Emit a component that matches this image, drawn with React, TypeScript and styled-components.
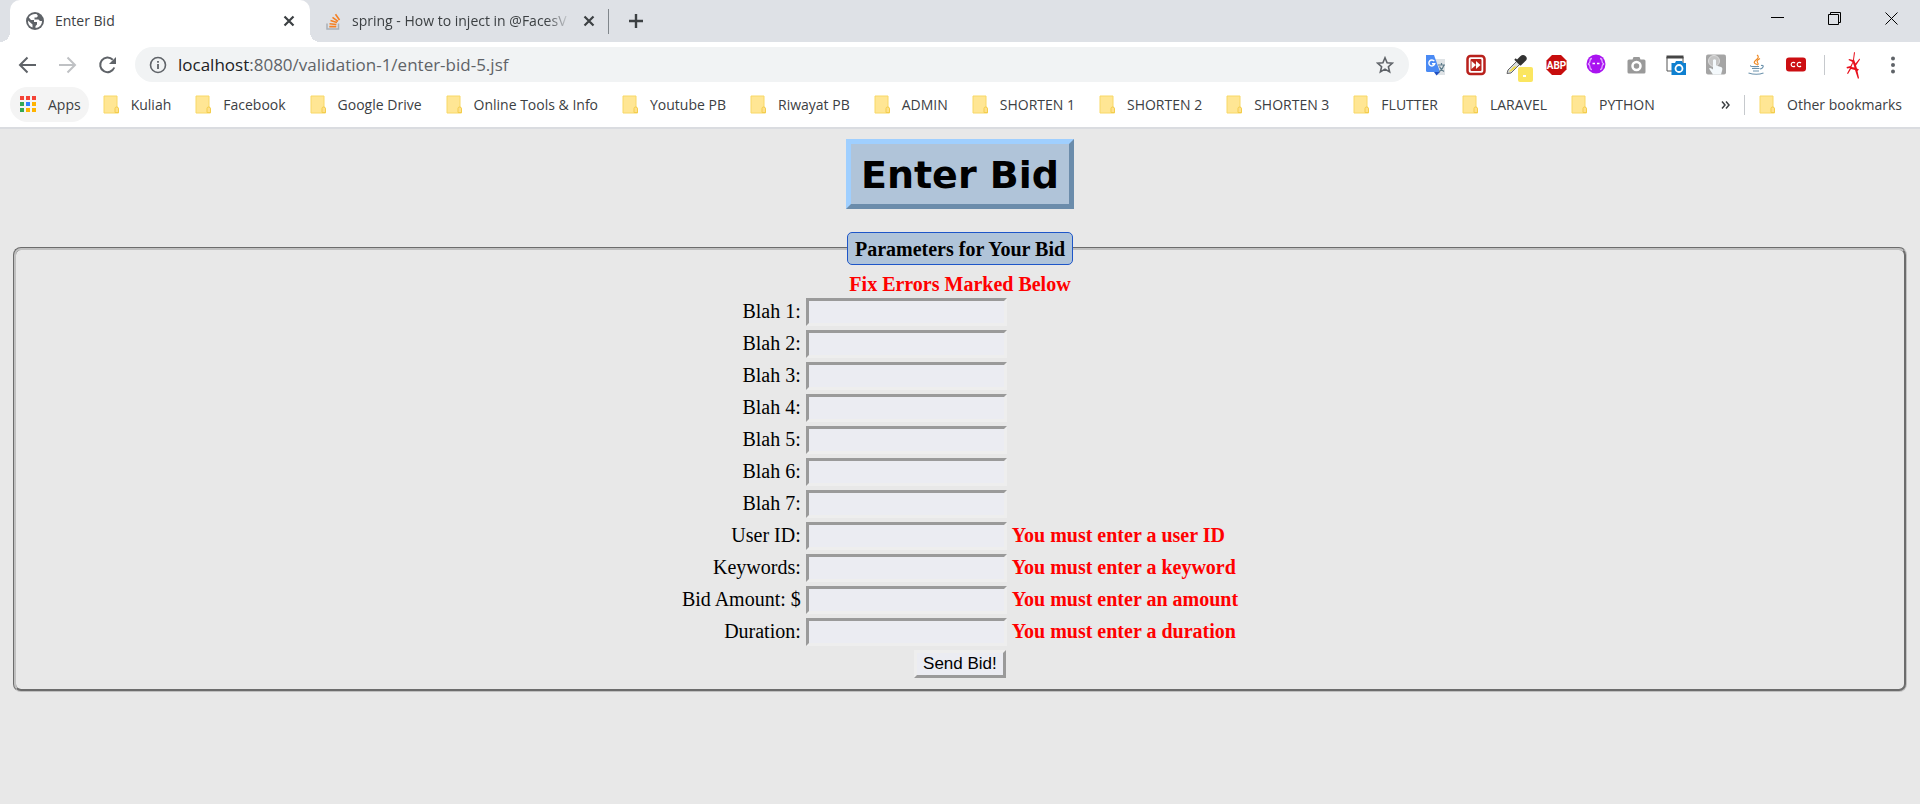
import React from "react";
import styled, { createGlobalStyle } from "styled-components";

const Global = createGlobalStyle`
  *, *::before, *::after { box-sizing: border-box; }
  html { background: #e8e8e8; }
  body { margin: 0; }
`;

const Browser = styled.header`
  font-family: "Open Sans", "Noto Sans", sans-serif;
  font-size: 14px;
  line-height: 20px;
  color: #3c4043;
  background: #fff;
  border-bottom: 2px solid #dadce0;
`;

const TabStrip = styled.div`
  display: flex;
  height: 42px;
  background: #dee1e6;
`;

const Tab = styled.div<{ $active?: boolean }>`
  position: relative;
  display: flex;
  align-items: center;
  width: 300px;
  padding: 0 11px 0 16px;
  border-radius: 10px 10px 0 0;
  background: ${(p) => (p.$active ? "#fff" : "transparent")};
  margin-left: ${(p) => (p.$active ? "10px" : "0")};
  &::before, &::after {
    content: "";
    display: ${(p) => (p.$active ? "block" : "none")};
    position: absolute;
    bottom: 0;
    width: 10px;
    height: 10px;
  }
  &::before { left: -10px; background: radial-gradient(circle at 0 0, transparent 10px, #fff 10px); }
  &::after { right: -10px; background: radial-gradient(circle at 100% 0, transparent 10px, #fff 10px); }
`;

const TabTitle = styled.span<{ $fade?: boolean }>`
  flex: 1;
  min-width: 0;
  margin: 0 6px 0 11px;
  white-space: nowrap;
  mask-image: ${(p) => (p.$fade ? "linear-gradient(to right, #000 88%, transparent 99%)" : "none")};
`;

const PlainButton = styled.button`
  display: flex;
  align-items: center;
  justify-content: center;
  padding: 0;
  border: 0;
  background: none;
  color: inherit;
  font: inherit;
`;

const TabDivider = styled.span`
  align-self: center;
  width: 1px;
  height: 25px;
  margin: 0 17px 0 -2px;
  background: #80868b;
`;

const WindowButtons = styled.div`
  display: flex;
  margin-left: auto;
  height: 37px;
`;

const WindowButton = styled(PlainButton)`
  width: 57px;
  color: #000;
`;

const Toolbar = styled.div`
  display: flex;
  align-items: center;
  height: 45px;
  padding: 0 15px 0 17px;
`;

const NavButtons = styled.div`
  display: flex;
  gap: 20px;
  margin-right: 18px;
  color: #5f6368;
`;

const AddressBar = styled.div`
  display: flex;
  flex: 1;
  align-items: center;
  gap: 11px;
  height: 35px;
  padding: 0 15px 0 14px;
  border-radius: 18px;
  background: #f1f3f4;
  color: #5f6368;
`;

const Url = styled.div`
  flex: 1;
  font-size: 17px;
  line-height: 24px;
  b { font-weight: 400; color: #202124; }
`;

const Extensions = styled.div`
  display: flex;
  align-items: center;
  gap: 16px;
  margin-left: 15px;
`;

const ExtensionButton = styled(PlainButton)`
  width: 24px;
  height: 30px;
`;

const Divider = styled.span`
  width: 1px;
  height: 20px;
  background: #c6c9cd;
`;

const Bookmarks = styled.nav`
  display: flex;
  align-items: center;
  height: 40px;
  padding: 0 18px 5px 10px;
`;

const Bookmark = styled.a`
  display: flex;
  align-items: center;
  gap: 11px;
  margin-right: 24px;
  color: inherit;
  text-decoration: none;
  white-space: nowrap;
  &:last-child { margin-right: 0; }
`;

const Apps = styled(Bookmark)`
  height: 35px;
  margin-right: 14px;
  padding: 0 8px 0 10px;
  border-radius: 18px;
  background: #f4f4f4;
`;

const More = styled(PlainButton)`
  margin-left: auto;
  margin-right: 14px;
`;

const BookmarkDivider = styled(Divider)`
  margin-right: 14px;
`;

const Page = styled.main`
  padding: 10px;
  font-family: "Liberation Serif", "Times New Roman", serif;
  font-size: 20px;
  line-height: 23px;
  color: #000;
`;

const Title = styled.h1`
  width: fit-content;
  margin: 0 auto 23px;
  padding: 6px 10px 4px;
  border: 5px solid;
  border-color: #9fcfff #6b8cab #6b8cab #9fcfff;
  background: #b0c4d9;
  font-family: "DejaVu Sans", Verdana, sans-serif;
  font-size: 38px;
  line-height: 50px;
  font-weight: 700;
`;

const Fieldset = styled.fieldset`
  margin: 0 3px;
  padding: 8px 15px 11px;
  border: 3px groove #c0c0c0;
  border-radius: 8px;
`;

const Legend = styled.legend`
  margin: 0 auto;
  padding: 5px 7px 3px;
  border: 1px solid #1e56c8;
  border-radius: 5px;
  background: #b0c4d9;
  font-weight: 700;
`;

const Summary = styled.p`
  margin: 0 0 2px;
  text-align: center;
  font-weight: 700;
  color: #f00;
`;

const Fields = styled.div`
  display: grid;
  grid-template-columns: auto 201px auto;
  justify-content: center;
  align-items: center;
  gap: 4px 5px;
`;

const FieldLabel = styled.label`
  grid-column: 1;
  padding-bottom: 2px;
  text-align: right;
`;

const Input = styled.input`
  width: 100%;
  height: 28px;
  border: 3px solid;
  border-color: #9a9a9a #eee #eee #9a9a9a;
  background: #ebecf2;
  font: 17px "Liberation Sans", Arial, sans-serif;
`;

const FieldError = styled.span`
  padding-bottom: 2px;
  font-weight: 700;
  color: #f00;
`;

const Submit = styled.button`
  grid-column: 2;
  justify-self: end;
  height: 28px;
  margin-right: 1px;
  padding: 0 6px;
  border: 3px solid;
  border-color: #eee #9a9a9a #9a9a9a #eee;
  background: #ebecf2;
  font: 17px/20px "Liberation Sans", Arial, sans-serif;
  color: #000;
`;

const bookmarks = [
  "Kuliah", "Facebook", "Google Drive", "Online Tools & Info", "Youtube PB", "Riwayat PB",
  "ADMIN", "SHORTEN 1", "SHORTEN 2", "SHORTEN 3", "FLUTTER", "LARAVEL", "PYTHON",
];

const fields: { id: string; label: string; error?: string }[] = [
  ...[1, 2, 3, 4, 5, 6, 7].map((n) => ({ id: `blah${n}`, label: `Blah ${n}:` })),
  { id: "userId", label: "User ID:", error: "You must enter a user ID" },
  { id: "keywords", label: "Keywords:", error: "You must enter a keyword" },
  { id: "amount", label: "Bid Amount: $", error: "You must enter an amount" },
  { id: "duration", label: "Duration:", error: "You must enter a duration" },
];

const Folder = () => (
  <svg width="17" height="19" viewBox="0 0 17 19">
    <path d="M1 1h13v11.500l1.500 1v4.500H1z" fill="#ffe694" stroke="#f8d866" />
    <path d="M12 17.500v-4q0-1.500 1.700-1.500t1.800 1.500v4z" fill="#ffe08a" stroke="#f3cd4c" />
  </svg>
);

const Globe = () => (
  <svg width="18" height="18" viewBox="0 0 18 18">
    <circle cx="9" cy="9" r="9" fill="#5f6368" />
    <path d="M10.500 2C7 1.500 4 3 2.800 5.500L5 8h3v2h3v2.500L9.500 14v2c3.500 0 6.500-3 6.500-7h-2l-1.500-1.500h-4V5.500h2L12 4z" fill="#fff" />
    <path d="M2 8.500l4.500 4v3C3.500 14.500 1.800 12 2 8.500z" fill="#fff" />
  </svg>
);

const StackOverflow = () => (
  <svg width="15" height="17" viewBox="0 0 15 17" fill="none">
    <path d="M1 10.500v5.500h11.500v-5.500" stroke="#a9b0b8" strokeWidth="1.500" />
    <path d="M3.300 13.600h7M3.500 10.800l6.900 .700M4.500 7.600l6.500 2M6.500 4.300l5.500 4M9.500 1.200l4 5.800" stroke="#f48024" strokeWidth="1.600" />
  </svg>
);

const Close = () => (
  <svg width="20" height="20" viewBox="0 0 20 20">
    <path d="M5.500 5.500l9 9M14.500 5.500l-9 9" stroke="#3c4043" strokeWidth="2.200" />
  </svg>
);

const GoogleApps = () => {
  const colors = ["#f44336", "#f44336", "#f44336", "#34a853", "#2f80ff", "#ffb300", "#34a853", "#ffb300", "#ffb300"];
  return (
    <svg width="17" height="17" viewBox="0 0 17 17">
      {colors.map((c, i) => (
        <rect key={i} x={(i % 3) * 6} y={Math.floor(i / 3) * 6} width="4" height="4" fill={c} />
      ))}
    </svg>
  );
};

const extensions: { name: string; art: React.ReactNode }[] = [
  {
    name: "Google Translate",
    art: (
      <>
        <path d="M9 9h12v16H12z" fill="#dfe3e6" />
        <path d="M2 5h8l6 17H3.500Q2 22 2 20.500z" fill="#4a8af4" />
        <path d="M10 22h6l-3.500 3.500z" fill="#1f4fc0" />
        <path d="M14 15h7M17.500 13v2M20 15q-1 4-5 7M15.500 16.500q1 3 4.500 5" stroke="#607d8b" strokeWidth="1.200" fill="none" />
        <path d="M10.300 11.200a3 3 0 1 0 .500 2.500H8" stroke="#fff" strokeWidth="1.400" fill="none" />
      </>
    ),
  },
  {
    name: "Fast forward",
    art: (
      <>
        <rect x="3.500" y="6" width="17" height="18" rx="3" fill="#fff" stroke="#b9211c" strokeWidth="2.500" />
        <rect x="6.500" y="9" width="11" height="12" rx="1" fill="#b9211c" />
        <path d="M7.500 11l4.500 4-4.500 4zM12 11l4.500 4-4.500 4z" fill="#fff" />
      </>
    ),
  },
  {
    name: "Color picker",
    art: (
      <>
        <path d="M3 23.500l1-3.500 9-9 3 3-9 9z" fill="#d9dcdf" stroke="#666" />
        <path d="M5 21.500l5-5h3l-6 5z" fill="#f5dc3c" />
        <path d="M11 9l6 6M13 11l4-4q2-2 4 0t-1 4l-3 3z" fill="#333" stroke="#333" strokeWidth="2" />
        <rect x="14" y="17" width="15" height="15" rx="2" fill="#fbe660" />
        <rect x="19" y="25" width="3" height="2" fill="#fff" />
      </>
    ),
  },
  {
    name: "AdBlock Plus",
    art: (
      <>
        <path d="M8 5h9l5.500 5.500v9L17 25H8l-5.500-5.500v-9z" fill="#c70d0d" />
        <text x="12.500" y="19" textAnchor="middle" fontFamily="Liberation Sans Narrow, Roboto, sans-serif" fontWeight="700" fontSize="10" fill="#fff">ABP</text>
      </>
    ),
  },
  {
    name: "JSON viewer",
    art: (
      <>
        <circle cx="12" cy="14" r="9.500" fill="#a913f0" />
        <path d="M8 8.500Q6 8.500 6 11t-2 3q2 .500 2 3t2 2.500M16 8.500q2 0 2 2.500t2 3q-2 .500-2 3t-2 2.500" stroke="#e0a8ff" strokeWidth="1.300" fill="none" />
        <path d="M8.500 13.500h2.500M13 13.500h2.500" stroke="#fff" strokeWidth="1.500" />
      </>
    ),
  },
  {
    name: "Screenshot",
    art: (
      <>
        <path d="M5 9.500h3.500l1-2.500h6l1 2.500H20q1.500 0 1.500 1.500V22q0 1.500-1.500 1.500H5Q3.500 23.500 3.500 22V11Q3.500 9.500 5 9.500z" fill="#999" />
        <circle cx="12.500" cy="16" r="4" fill="#999" stroke="#fff" strokeWidth="2.500" />
      </>
    ),
  },
  {
    name: "Window capture",
    art: (
      <>
        <path d="M3 7h16v14H3z" fill="#fff" stroke="#555" />
        <path d="M2.500 5.500h17v3h-17z" fill="#454545" />
        <path d="M7.500 13h3.500l1-2h6l1 2h3v12H7.500z" fill="#0f80d0" />
        <circle cx="15" cy="18.500" r="3.500" fill="none" stroke="#fff" strokeWidth="1.800" />
      </>
    ),
  },
  {
    name: "Click tool",
    art: (
      <>
        <rect x="2" y="4.500" width="20" height="20" rx="2" fill="#a5a5a5" />
        <circle cx="10" cy="11" r="5.500" fill="#c4c4c4" stroke="#ddd" />
        <path d="M9 10q1.500-1.500 3 0v5.500l5 1.500q2 .500 1 4L17 24.500H9l-4-6q1-1.500 4 1z" fill="#f4f9fc" />
      </>
    ),
  },
  {
    name: "Java",
    art: (
      <>
        <path d="M13 5q3 2-1 5t1 4.500M16 8.500q-4 2-2.500 4T13 15" stroke="#ef8a25" strokeWidth="1.200" fill="none" />
        <path d="M7 15.500q-2 1.500 8 1M8 18.500h7.500M9 21h6M4.500 23q8 2.500 15 0M17 15.500q3-.500 2 1.500t-3 2" stroke="#6d93ad" strokeWidth="1.200" fill="none" />
      </>
    ),
  },
  {
    name: "Closed captions",
    art: (
      <>
        <rect x="2" y="7.500" width="20" height="14" rx="3" fill="#cc0e12" />
        <path d="M11 13a2.200 2.200 0 1 0 0 3M17 13a2.200 2.200 0 1 0 0 3" stroke="#fff" strokeWidth="1.200" fill="none" />
      </>
    ),
  },
];

export default function App() {
  return (
    <>
      <Global />
      <Browser>
        <TabStrip>
          <Tab $active>
            <Globe />
            <TabTitle>Enter Bid</TabTitle>
            <PlainButton aria-label="Close tab"><Close /></PlainButton>
          </Tab>
          <Tab>
            <StackOverflow />
            <TabTitle $fade>spring - How to inject in @FacesV</TabTitle>
            <PlainButton aria-label="Close tab"><Close /></PlainButton>
          </Tab>
          <TabDivider />
          <PlainButton aria-label="New tab">
            <svg width="20" height="20" viewBox="0 0 20 20">
              <path d="M10 3v14M3 10h14" stroke="#3c4043" strokeWidth="2.400" />
            </svg>
          </PlainButton>
          <WindowButtons>
            <WindowButton aria-label="Minimize">
              <svg width="14" height="14" viewBox="0 0 14 14"><path d="M0 5.500h13" stroke="currentColor" /></svg>
            </WindowButton>
            <WindowButton aria-label="Restore">
              <svg width="14" height="14" viewBox="0 0 14 14" fill="none" stroke="currentColor">
                <path d="M.500 2.500h10v10H.500zM2.500 2V.500h10v10H11" />
              </svg>
            </WindowButton>
            <WindowButton aria-label="Close">
              <svg width="14" height="14" viewBox="0 0 14 14"><path d="M.500 .500l12 12M12.500 .500l-12 12" stroke="currentColor" /></svg>
            </WindowButton>
          </WindowButtons>
        </TabStrip>
        <Toolbar>
          <NavButtons>
            <PlainButton aria-label="Back">
              <svg width="20" height="20" viewBox="0 0 20 20" fill="none" stroke="#5f6368" strokeWidth="2">
                <path d="M19 10H4M10.500 2.500L3 10l7.500 7.500" />
              </svg>
            </PlainButton>
            <PlainButton aria-label="Forward">
              <svg width="20" height="20" viewBox="0 0 20 20" fill="none" stroke="#bfc1c4" strokeWidth="2">
                <path d="M2 10h15M10.500 2.500L18 10l-7.500 7.500" />
              </svg>
            </PlainButton>
            <PlainButton aria-label="Reload">
              <svg width="20" height="20" viewBox="0 0 20 20">
                <path d="M17.300 12.500a7.300 7.300 0 1 1-1.500-7.700" fill="none" stroke="#5f6368" strokeWidth="2" />
                <path d="M19 2v7h-7z" fill="#5f6368" />
              </svg>
            </PlainButton>
          </NavButtons>
          <AddressBar>
            <svg width="18" height="18" viewBox="0 0 18 18">
              <circle cx="9" cy="9" r="7.500" fill="none" stroke="#5f6368" strokeWidth="1.600" />
              <path d="M9 8v5M9 5v1.800" stroke="#5f6368" strokeWidth="1.800" />
            </svg>
            <Url><b>localhost</b>:8080/validation-1/enter-bid-5.jsf</Url>
            <PlainButton aria-label="Bookmark this page">
              <svg width="18" height="18" viewBox="0 0 18 18">
                <path d="M9 1.800l2.100 4.900 5.300 .500-4 3.500 1.200 5.200L9 13.100l-4.600 2.800 1.200-5.200-4-3.500 5.300-.500z" fill="none" stroke="#5f6368" strokeWidth="1.600" />
              </svg>
            </PlainButton>
          </AddressBar>
          <Extensions>
            {extensions.map((e) => (
              <ExtensionButton key={e.name} aria-label={e.name}>
                <svg width="24" height="30" viewBox="0 0 24 30" overflow="visible">{e.art}</svg>
              </ExtensionButton>
            ))}
            <Divider />
            <ExtensionButton aria-label="Profile">
              <svg width="24" height="30" viewBox="0 0 24 30" fill="#e8101c">
                <path d="M13 2l1 .500-1 7 1.500 4 4-5 .500 1-4 6 1 3 2 1-1.500 1.500 1.500 7-1 1-3-9-4-1-3 5-1-.500 3-5.500-3 .500-.500-1.500 4-1 2-4-4-2 .500-1 4 1z" />
                <path d="M12 13l-1.500 4 3 .500z" fill="#fff" />
              </svg>
            </ExtensionButton>
            <ExtensionButton aria-label="Menu">
              <svg width="24" height="24" viewBox="0 0 24 24" fill="#5f6368">
                <circle cx="12" cy="5.500" r="2" /><circle cx="12" cy="12" r="2" /><circle cx="12" cy="18.500" r="2" />
              </svg>
            </ExtensionButton>
          </Extensions>
        </Toolbar>
        <Bookmarks>
          <Apps href="#apps"><GoogleApps />Apps</Apps>
          {bookmarks.map((b) => (
            <Bookmark href="#folder" key={b}><Folder />{b}</Bookmark>
          ))}
          <More aria-label="More bookmarks">
            <svg width="9" height="8" viewBox="0 0 9 8" fill="none" stroke="#3c4043" strokeWidth="1.500">
              <path d="M1 .500L4 4 1 7.500M5 .500L8 4 5 7.500" />
            </svg>
          </More>
          <BookmarkDivider />
          <Bookmark href="#other"><Folder />Other bookmarks</Bookmark>
        </Bookmarks>
      </Browser>
      <Page>
        <Title>Enter Bid</Title>
        <form onSubmit={(e) => e.preventDefault()}>
          <Fieldset>
            <Legend>Parameters for Your Bid</Legend>
            <Summary>Fix Errors Marked Below</Summary>
            <Fields>
              {fields.map((f) => (
                <React.Fragment key={f.id}>
                  <FieldLabel htmlFor={f.id}>{f.label}</FieldLabel>
                  <Input id={f.id} />
                  {f.error && <FieldError>{f.error}</FieldError>}
                </React.Fragment>
              ))}
              <Submit>Send Bid!</Submit>
            </Fields>
          </Fieldset>
        </form>
      </Page>
    </>
  );
}
